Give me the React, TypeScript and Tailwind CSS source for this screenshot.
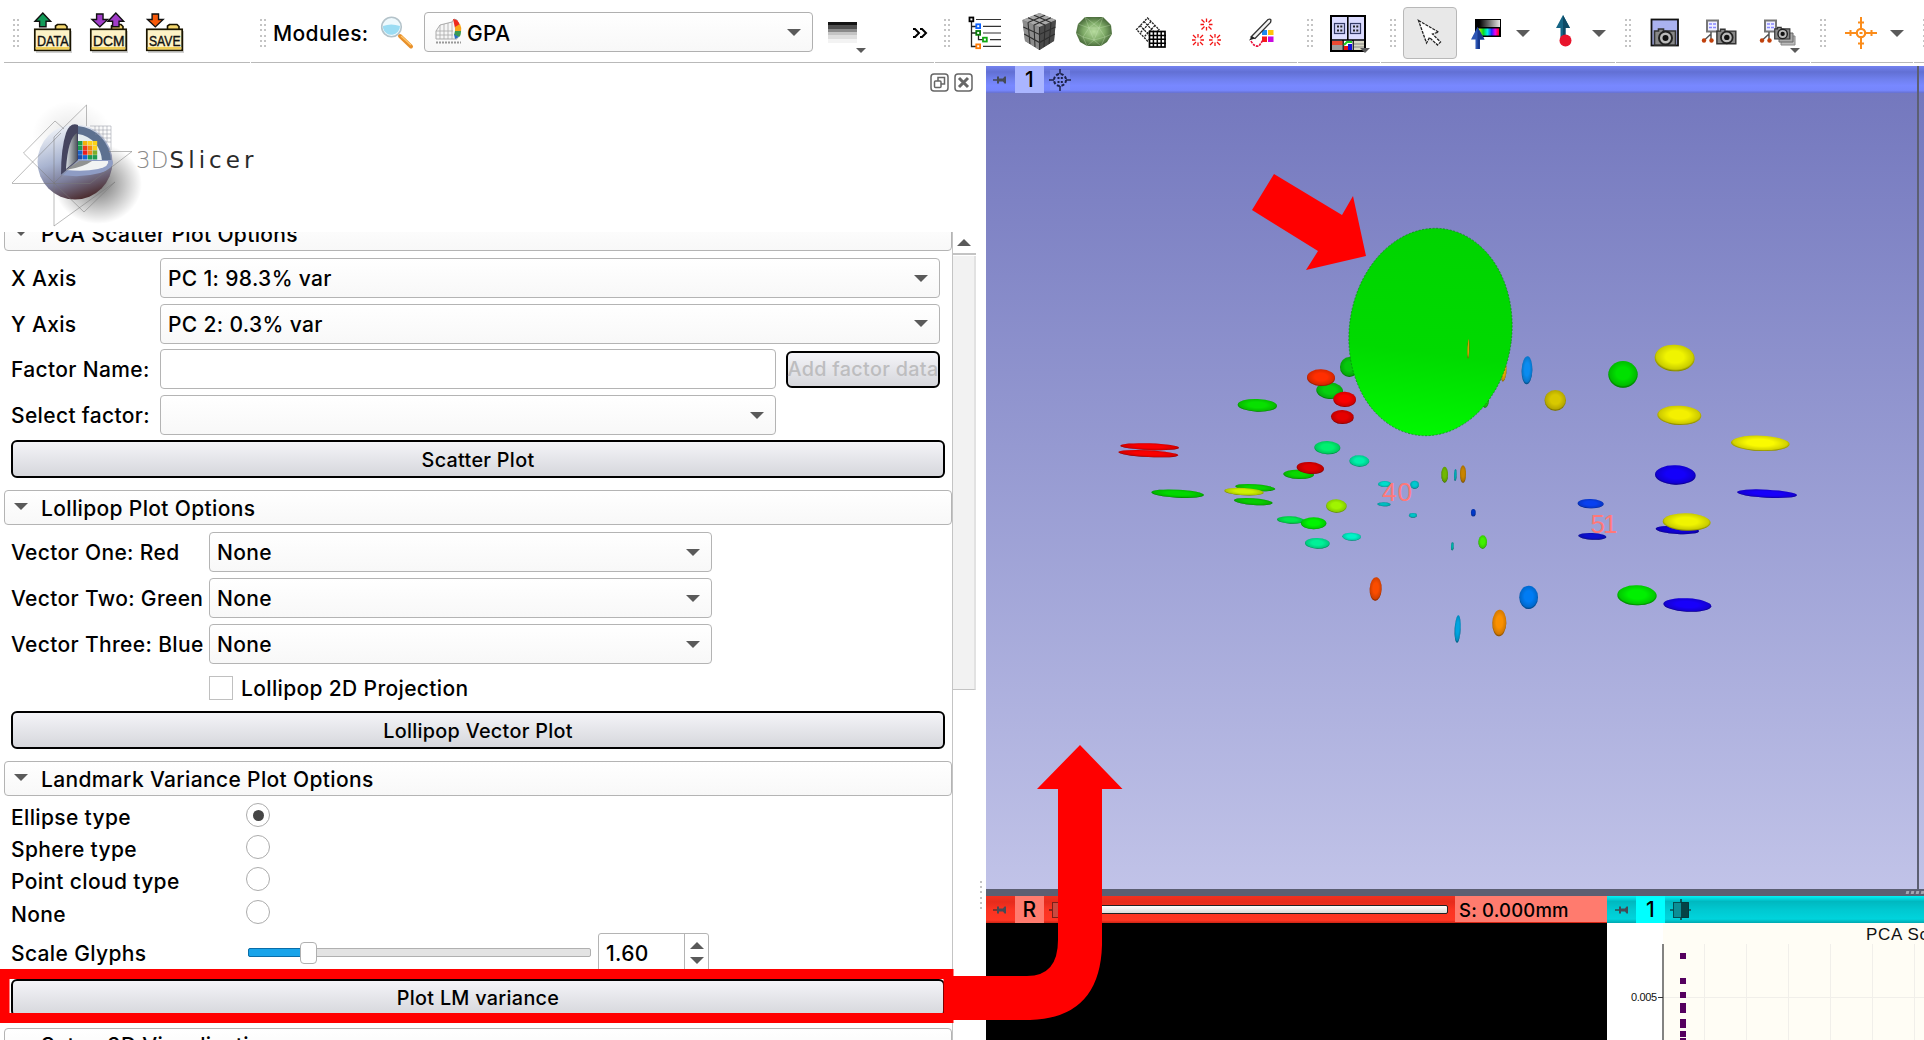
import React from "react";

type Kids = { children?: React.ReactNode };

const Caret = ({ className = "" }: { className?: string }) => (
  <svg className={`h-[7px] w-[14px] shrink-0 ${className}`} viewBox="0 0 14 7">
    <path d="M0 0H14L7 7Z" fill="#5a5a5a" />
  </svg>
);

const SmallCaret = ({ className = "" }: { className?: string }) => (
  <svg className={`h-[5px] w-[10px] shrink-0 ${className}`} viewBox="0 0 10 5">
    <path d="M0 0H10L5 5Z" fill="#5a5a5a" />
  </svg>
);

const Handle = () => (
  <div className="mt-[19px] grid h-[28px] w-[8px] shrink-0 grid-cols-2 content-between">
    {Array.from({ length: 12 }, (_, i) => (
      <i key={i} className="h-[2px] w-[2px] bg-[#c4c4c4]" />
    ))}
  </div>
);

const Bar = ({ className = "", children }: Kids & { className?: string }) => (
  <div className={`flex h-[63px] shrink-0 border-b-[1.5px] border-[#b9b9b9] pl-[9px] ${className}`}>
    <Handle />
    {children}
  </div>
);

const UP = "M0 9L8.5 0L17 9H12V15H5V9Z";
const DOWN = "M0 6H5V0H12V6H17L8.5 14Z";

const Folder = ({ label, arrows }: { label: string; arrows: [string, number, number, string][] }) => (
  <svg className="mt-[12px] h-[41px] w-[40px] shrink-0" viewBox="0 0 40 41">
    <rect x="3" y="19" width="36" height="22" fill="#00000030" />
    <path d="M22.5 17V14L24.5 12.5H32L34 14.5V17" fill="#f5d76e" stroke="#1a1400" strokeWidth="1.6" />
    {arrows.map(([d, x, y, c], i) => (
      <path key={i} d={d} transform={`translate(${x} ${y}) scale(.92)`} fill={c} stroke="#111" strokeWidth="1.5" />
    ))}
    <rect x="1.8" y="17.3" width="35.4" height="21" fill="#fdf2c6" stroke="#1a1400" strokeWidth="1.7" />
    <rect x="2.7" y="35" width="33.6" height="2.5" fill="#f2cf57" />
    <text x="4" y="34" letterSpacing="0" fontFamily="Liberation Sans" fontSize="15.5" textLength="31.5" lengthAdjust="spacingAndGlyphs" fill="#111" stroke="#111" strokeWidth=".4">
      {label}
    </text>
  </svg>
);

const Magnifier = () => (
  <svg className="ml-[14px] mt-[15px] h-[35px] w-[34px] shrink-0" viewBox="0 0 34 35">
    <path d="M20 21L31 31.5" stroke="#e8902a" strokeWidth="4" strokeLinecap="round" />
    <path d="M21 21L31 30" stroke="#ffc66b" strokeWidth="1.3" />
    <circle cx="11.5" cy="12" r="9.8" fill="#eef9fd" stroke="#b4c3ca" strokeWidth="1.6" />
    <path d="M3 11Q11 8 20 11A8.6 8.6 0 0 1 3 13Z" fill="#9bdcf3" />
  </svg>
);

const GpaIcon = () => (
  <svg className="h-[28px] w-[28px] shrink-0" viewBox="0 0 28 28">
    <path d="M1 13L5 7L17 4L19 1L22 2V21L1 21Z" fill="#f6f6f6" stroke="#aaa" strokeWidth="1" />
    <path d="M1 13H18M1 17H18M5 7V21M9 6V21M13 5V21M17 4V21" stroke="#aaa" strokeWidth=".8" />
    <path d="M18 1Q23 1 25 7L20 10Z" fill="#ee2a1c" />
    <path d="M20 9L25 6Q27 10 26 14L20 14Z" fill="#f9a51a" />
    <path d="M20 13H26Q26 18 24 19L19 17Z" fill="#3a9a52" />
    <path d="M19 16L24 19L20 21Z" fill="#2a6fc0" />
    <path d="M1 24.5H26" stroke="#999" strokeWidth="1.8" strokeDasharray="2 1" />
  </svg>
);

const TreeIcon = () => (
  <svg className="ml-[16px] mt-[16px] h-[34px] w-[34px] shrink-0" viewBox="0 0 34 34">
    <path d="M3.5 4V30.5H9M3.5 10.5H9M3.5 17H9M10.5 19V23.7H15" fill="none" stroke="#222" strokeWidth="1.3" />
    <path d="M8 3.5H33M15 10.3H33M15 17H33M22 23.7H33M15 30.4H33" stroke="#333" strokeWidth="1.2" />
    {[[1.5, 1.5, "#000"], [8.3, 8.3, "#0a62ff"], [8.3, 15, "#087a08"], [15, 21.7, "#12a812"], [8.3, 28.4, "#ff7a00"]].map(([x, y, c]) => (
      <rect key={`${x}-${y}`} x={x} y={y} width="3.8" height="3.8" fill="#fff" stroke={c as string} strokeWidth="1.8" />
    ))}
  </svg>
);

const CubeIcon = () => (
  <svg className="ml-[19px] mt-[12px] h-[40px] w-[37px] shrink-0" viewBox="0 0 37 40">
    <path d="M18.5 1L35 8L33 29L18.5 38L4 29L1.5 8Z" fill="#777" />
    <path d="M18.5 1L35 8L18.5 15L1.5 8Z" fill="#a9a9a9" />
    <path d="M1.5 8L18.5 15V38L4 29Z" fill="#8c8c8c" />
    <path d="M35 8L18.5 15V38L33 29Z" fill="#4a4a4a" />
    <path
      d="M7 5.8L24 13M13 3.3L30 10.5M30 5.8L13 13M24 3.3L7 10.5M2.3 15L18.5 22.5L34.5 15M3.2 22L18.5 30.5L33.8 22M7 10.5L9 32M13 13L14 35M30 10.5L28 32M24 13L23 35M18.5 15V38"
      fill="none" stroke="#2e2e2e" strokeWidth="1.1"
    />
  </svg>
);

const ModelIcon = () => (
  <svg className="ml-[17px] mt-[16px] h-[31px] w-[38px] shrink-0" viewBox="0 0 38 31">
    <defs>
      <radialGradient id="model">
        <stop offset="0" stopColor="#b8dda0" />
        <stop offset=".6" stopColor="#7fab68" />
        <stop offset="1" stopColor="#4d6f3e" />
      </radialGradient>
    </defs>
    <path d="M10 1H28L36 9L37 18L32 26L26 30H12L5 26L1 17L3 8Z" fill="url(#model)" />
    <path d="M10 1L14 12L3 8M28 1L24 12L36 9M14 12H24M14 12L8 21L1 17M24 12L30 21L37 18M14 12L19 24L24 12M8 21L19 24L30 21M8 21L12 30L19 24L26 30L30 21M10 1L24 12M28 1L14 12" fill="none" stroke="#cfe8bf" strokeOpacity=".4" strokeWidth=".8" />
  </svg>
);

const TransformIcon = () => (
  <svg className="ml-[22px] mt-[16px] h-[33px] w-[32px] shrink-0" viewBox="0 0 32 33">
    <g fill="none" stroke="#222" strokeWidth="1.3" strokeDasharray="2.2 1">
      <path d="M12.5 2L24 13.5L12.5 25L1.5 13.5Z" />
      <path d="M9 5.5L20 17M5 9.5L16 21M16 5.500L5 17M20 9.500L9 21" />
    </g>
    <rect x="14.5" y="15.5" width="15.5" height="15.5" fill="#fff" stroke="#000" strokeWidth="1.7" />
    <path d="M18.4 15V31M22.3 15V31M26.2 15V31M14 19.4H31M14 23.3H31M14 27.2H31" stroke="#000" strokeWidth="1.5" />
  </svg>
);

const Burst = ({ x, y }: { x: number; y: number }) => (
  <path transform={`translate(${x} ${y})`} d="M0-6V-2.500M0 2.500V6M-6 0H-2.500M2.500 0H6M-5-5L-2-2M5-5L2-2M-5 5L-2 2M5 5L2 2" stroke="#f31414" strokeWidth="1.300" />
);

const MarkupsIcon = () => (
  <svg className="ml-[23px] mt-[17px] h-[30px] w-[33px] shrink-0" viewBox="0 0 33 30">
    <Burst x={16.5} y={7.5} />
    <Burst x={8} y={23} />
    <Burst x={25} y={23} />
  </svg>
);

const EditorIcon = () => (
  <svg className="ml-[25px] mt-[17px] h-[32px] w-[28px] shrink-0" viewBox="0 0 28 32">
    <rect x="14" y="13" width="5" height="5" fill="#1b8bf2" />
    <rect x="20" y="13" width="5.5" height="5" fill="#ffc30a" />
    <rect x="14" y="19.5" width="5" height="5.5" fill="#f41b1b" />
    <rect x="20" y="19.5" width="5.5" height="5.5" fill="#c80ae0" />
    <path d="M3 24Q6 30 11 29L15 23" fill="none" stroke="#e8103c" strokeWidth="1.6" strokeDasharray="2.5 1" />
    <path d="M3 20L20 2.5Q24 1 22.5 5.5L7 21.5Z" fill="#f4f4f4" stroke="#333" strokeWidth="1.3" />
    <path d="M1 23.5L4 19L7 21.5Z" fill="#222" />
  </svg>
);

const LayoutIcon = () => (
  <svg className="h-[37px] w-[36px]" viewBox="0 0 36 37">
    <rect x="1" y="1" width="34" height="35" fill="#dcdcff" stroke="#000" strokeWidth="2" />
    <path d="M17.8 1V25M1 25H35M13 25V36M23 25V36" stroke="#000" strokeWidth="1.6" />
    {[4.5, 20.5].map((x) => (
      <g key={x}>
        <rect x={x} y="8.5" width="10" height="10" fill="#cfd0f5" stroke="#333a66" strokeWidth="1.2" />
        <path d={`M${x + 2.5} 11.5h2M${x + 5.8} 11.5h2M${x + 2.5} 15.5h2M${x + 5.8} 15.5h2`} stroke="#222" strokeWidth="1.8" />
      </g>
    ))}
    <rect x="2" y="26" width="10.5" height="4" fill="#ec4a33" />
    <rect x="2" y="30" width="10.5" height="5" fill="#9d9d9d" />
    <rect x="14" y="26" width="8.5" height="9" fill="#fff" />
    <path d="M14 31h4v4h-4z" fill="#e11" />
    <path d="M18 29h4v6h-4z" fill="#1010d8" />
    <path d="M14 30l3-3h5" stroke="#2c2" strokeWidth="2" fill="none" />
    <rect x="24" y="26" width="10" height="9" fill="#d9d8c4" />
    <path d="M24 29H34M24 32H34" stroke="#888" />
  </svg>
);

const CursorIcon = () => (
  <svg className="h-[29px] w-[26px]" viewBox="0 0 26 29">
    <path d="M1.5 1.5L21.5 13L15.5 15L23.5 23L20.5 26L12.5 18.5L9.5 24Z" fill="#fff" stroke="#222" strokeWidth="1.3" strokeDasharray="3 1" />
  </svg>
);

const WindowLevelIcon = () => (
  <svg className="ml-[13px] mt-[18px] h-[32px] w-[31px] shrink-0" viewBox="0 0 31 32">
    <defs>
      <linearGradient id="gray"><stop offset=".1" /><stop offset="1" stopColor="#e8e8e8" /></linearGradient>
      <linearGradient id="hue">
        <stop offset="0" stopColor="#fe0" /><stop offset=".25" stopColor="#0d2" /><stop offset=".45" stopColor="#0ee" />
        <stop offset=".65" stopColor="#22f" /><stop offset=".82" stopColor="#e0e" /><stop offset="1" stopColor="#f01" />
      </linearGradient>
    </defs>
    <rect x="5" y="1" width="26" height="18" fill="#000" />
    <rect x="7" y="2" width="23" height="7" fill="url(#gray)" />
    <rect x="8" y="10.5" width="21" height="7" fill="url(#hue)" />
    <path d="M7.5 9L14.5 21.5H10V31H5.5V21.5H1Z" fill="#2d56b5" />
    <path d="M7.5 9L14.5 21.5H10V31H7.5Z" fill="#17398f" />
  </svg>
);

const PlaceIcon = () => (
  <svg className="ml-[25px] mt-[14px] h-[33px] w-[18px] shrink-0" viewBox="0 0 18 33">
    <path d="M8 1L15 14H10.5V24H5.5V14H1Z" fill="#156585" />
    <path d="M8 1L15 14H10.5V24H8Z" fill="#0d4a66" />
    <circle cx="10.5" cy="26.5" r="6" fill="#e8142c" />
  </svg>
);

const Camera = ({ x, y, s = 1 }: { x: number; y: number; s?: number }) => (
  <g transform={`translate(${x} ${y}) scale(${s})`}>
    <path d="M1 4H5V2H10V4H22V18H1Z" fill="#888" stroke="#333" strokeWidth="1.6" />
    <circle cx="12" cy="11" r="6.5" fill="#bbb" stroke="#222" strokeWidth="2" />
    <circle cx="12" cy="11" r="3" fill="#111" />
  </g>
);

const Tree3 = () => (
  <g>
    <rect x="6" y="1.5" width="11" height="11" fill="#eef" stroke="#777" strokeWidth="2" />
    <path d="M8 5h3M12 5h3M8 8.5h3M12 8.5h3" stroke="#88f" strokeWidth="1.3" />
    <path d="M10 13V15L3.5 21M10 15V21M10 13V16" fill="none" stroke="#555" strokeWidth="1.5" />
    <circle cx="3" cy="21.5" r="2.2" fill="#c0400c" />
    <circle cx="10.5" cy="21.5" r="2.2" fill="#c0400c" />
  </g>
);

const CrosshairIcon = () => (
  <svg className="ml-[16px] mt-[16px] h-[34px] w-[34px] shrink-0" viewBox="-17 -17 34 34" fill="none" stroke="#fb8c1a" strokeWidth="2">
    <path d="M0-16V16M-16 0H16M-3-10.5H3M-3 10.5H3M-10.5-3V3M10.5-3V3" />
    <circle r="4.2" fill="#fff" strokeWidth="2.2" />
    <path d="M-1.5 0H1.5" />
  </svg>
);

const Toolbar = () => (
  <div className="flex h-[63px] w-full gap-[1px] overflow-hidden pl-[4px]">
    <Bar className="w-[246px]">
      <div className="ml-[12px] flex gap-[16px]">
        <Folder label="DATA" arrows={[[UP, 2, 1, "#129a58"]]} />
        <Folder label="DCM" arrows={[[DOWN, 3, 2, "#a03cc8"], [UP, 19, 1, "#a03cc8"]]} />
        <Folder label="SAVE" arrows={[[DOWN, 2.5, 2, "#f85a0a"]]} />
      </div>
    </Bar>
    <Bar className="w-[683px]">
      <span className="ml-[5px] mt-[19px] h-[30px] w-[93px] whitespace-nowrap leading-[30px]">Modules:</span>
      <Magnifier />
      <div className="ml-[10px] mt-[12px] flex h-[40px] w-[389px] shrink-0 items-center rounded-[4px] border-[1.5px] border-[#b0b0b0] bg-linear-to-b from-white to-[#f8f8f8] pl-[10px] pr-[11px]">
        <GpaIcon />
        <span className="ml-[4px] mt-[4px] flex-1">GPA</span>
        <Caret />
      </div>
      <div className="ml-[15px] mt-[22px] w-[38px] shrink-0">
        <div className="h-[21px] w-[29px] bg-[linear-gradient(#141414_0_3px,#505050_3px_7px,#8a8a8a_7px_10px,#c4c4c4_10px_13px,#dedede_13px_17px,#f3f3f3_17px)]" />
        <SmallCaret className="ml-[28px] mt-[5px]" />
      </div>
      <svg className="ml-[46px] mt-[28px] h-[10px] w-[16px] shrink-0" viewBox="0 0 16 10" fill="none" stroke="#000" strokeWidth="2">
        <path d="M1 1H3L7 5L3 9H1M8 1H10L14 5L10 9H8" />
      </svg>
    </Bar>
    <Bar className="w-[362px]">
      <TreeIcon /><CubeIcon /><ModelIcon /><TransformIcon /><MarkupsIcon /><EditorIcon />
    </Bar>
    <Bar className="w-[82px]">
      <div className="relative ml-[15px] mt-[15px]">
        <LayoutIcon />
        <SmallCaret className="absolute left-[30px] top-[33px]" />
      </div>
    </Bar>
    <Bar className="w-[234px]">
      <div className="ml-[5px] mt-[7px] flex h-[52px] w-[54px] shrink-0 items-center justify-center rounded-[4px] border-[1.5px] border-[#b8b8b8] bg-[#e8e8e8]">
        <CursorIcon />
      </div>
      <WindowLevelIcon />
      <Caret className="ml-[15px] mt-[30px]" />
      <PlaceIcon />
      <Caret className="ml-[19px] mt-[30px]" />
    </Bar>
    <Bar className="w-[194px]">
      <svg className="ml-[17px] mt-[18px] h-[30px] w-[30px] shrink-0" viewBox="0 0 30 30">
        <rect x="1.5" y="1.5" width="26.5" height="26" fill="#aab2ef" stroke="#111" strokeWidth="1.8" />
        <Camera x={3.5} y={9} />
      </svg>
      <svg className="ml-[21px] mt-[19px] h-[28px] w-[38px] shrink-0" viewBox="0 0 38 28">
        <Tree3 /><Camera x={15} y={8.5} s={0.9} />
      </svg>
      <div className="relative ml-[20px] mt-[19px] w-[40px] shrink-0">
        <svg className="h-[28px] w-[38px]" viewBox="0 0 38 28">
          <Tree3 />
          <path d="M22 17h14v9h-14z" fill="#bbb" stroke="#888" />
          <path d="M20 14h14v9h-14z" fill="#aaa" stroke="#666" />
          <Camera x={15} y={7} s={0.72} />
        </svg>
        <SmallCaret className="absolute left-[31px] top-[29px]" />
      </div>
    </Bar>
    <Bar className="w-[102px]">
      <CrosshairIcon />
      <Caret className="ml-[12px] mt-[30px]" />
    </Bar>
    <Bar className="w-[20px]" />
  </div>
);

const VOXELS = [
  "#1f9a50", "#f2b10c", "#ffd21a", "#ffd21a", "#1f9a50", "#ee3a1c", "#f58a12", "#ffd21a",
  "#1a64c8", "#ee1c1c", "#f2861c", "#7cae2c", "#1c4fae", "#1a66d6", "#1f9a50", "#1f9a50",
];

const Logo = () => (
  <svg className="h-[130px] w-[260px] shrink-0" viewBox="0 100 260 130">
    <defs>
      <linearGradient id="ball" x1=".25" y1="0" x2=".6" y2="1">
        <stop offset="0" stopColor="#f3f6fa" /><stop offset=".45" stopColor="#a9b4d0" />
        <stop offset=".7" stopColor="#7d7f9c" /><stop offset="1" stopColor="#4a2a2c" />
      </linearGradient>
      <radialGradient id="shade"><stop offset="0" stopColor="#000" stopOpacity=".55" /><stop offset="1" stopColor="#000" stopOpacity="0" /></radialGradient>
      <linearGradient id="inner"><stop offset="0" stopColor="#d8dee2" /><stop offset="1" stopColor="#555a62" /></linearGradient>
    </defs>
    <ellipse cx="98" cy="184" rx="44" ry="40" fill="url(#shade)" />
    <ellipse cx="72" cy="135" rx="40" ry="34" fill="url(#shade)" opacity=".18" />
    <circle cx="75" cy="162" r="37.5" fill="url(#ball)" />
    <path d="M78 126A36 36 0 0 1 111 161L78 161Z" fill="#5d7190" />
    <path d="M78 134A28 28 0 0 1 102 161L78 161Z" fill="#e4edf0" />
    <path d="M78 125Q70 122 66 133Q61 148 61 175L78 161Z" fill="#45455f" />
    <path d="M77 133Q68 138 66 169L77 160Z" fill="url(#inner)" />
    <path d="M61 175L78 160L112 160Q116 168 100 173Q82 178 61 175Z" fill="#8e9cc4" />
    <path d="M66 170L79 161L108 161Q110 166 98 169Q84 172 66 170Z" fill="#f1f3f3" />
    <path d="M66 170L79 161L92 161Q84 167 66 170Z" fill="#00000066" />
    {VOXELS.map((c, i) => (
      <rect key={i} x={78 + (i % 4) * 4.9} y={141 + Math.floor(i / 4) * 4.7} width="4.5" height="4.4" fill={c} />
    ))}
    <path d="M90 126H111M92 130H111M95 134H111M100 138H111M105 142H111M95 126V131M99 126V134M103 126V138M107 126V142M111 126V150" stroke="#8a8f9c" strokeOpacity=".7" strokeWidth=".7" />
    <path d="M54 226V137L86.5 105V126M54 226L115 182L84 212L54 183L23.5 153L55 121L64 129M12 183L61 133M12 183.5H90L132 151.5H108M54 183L78 160" fill="none" stroke="#777" strokeOpacity=".5" strokeWidth="1" />
    <g fontFamily="DejaVu Sans" fontSize="23" letterSpacing="0">
      <text x="136" y="168" textLength="32.5" fill="#8a8a8a" fontWeight="200">3D</text>
      <text x="169.5" y="168" textLength="84" fill="#2a2a2a">Slicer</text>
    </g>
  </svg>
);

const Section = ({ title, className = "" }: { title: string; className?: string }) => (
  <div className={`ml-[4px] flex h-[35px] w-[948px] shrink-0 items-center rounded-[4px] border-[1.5px] border-[#b4b4b4] bg-linear-to-b from-white to-[#f8f8f8] pl-[9px] ${className}`}>
    <Caret className="mb-[2px]" />
    <span className="ml-[13px] mt-[2px] whitespace-nowrap">{title}</span>
  </div>
);

const Select = ({ value, className = "" }: { value?: string; className?: string }) => (
  <div className={`flex h-[40px] shrink-0 items-center justify-between rounded-[4px] border-[1.5px] border-[#b4b4b4] bg-linear-to-b from-white to-[#f8f8f8] pl-[7px] pr-[11px] ${className}`}>
    <span className="mt-[2px] whitespace-nowrap">{value}</span>
    <Caret />
  </div>
);

const BTN = "rounded-[6px] border-2 border-black bg-linear-to-b from-[#f4f4f8] to-[#d6d7dc] text-[19.8px] tracking-[0.3px]";

const Action = ({ label, className = "" }: { label: string; className?: string }) => (
  <button className={`ml-[11px] h-[38px] w-[934px] shrink-0 pt-[1px] ${BTN} ${className}`}>{label}</button>
);

const Field = ({ label, labelClass, children }: Kids & { label: string; labelClass: string }) => (
  <div className="flex h-[40px] shrink-0 items-center pl-[11px]">
    <span className={`mt-[2px] shrink-0 whitespace-nowrap ${labelClass}`}>{label}</span>
    {children}
  </div>
);

const ModulePanel = () => (
  <div className="flex h-[977px] w-[986px] shrink-0 flex-col">
    <div className="flex h-[169px] shrink-0 justify-between">
      <div className="pt-[37px]"><Logo /></div>
      <div className="mr-[13px] mt-[10px] flex gap-[5px]">
        <svg className="h-[19px] w-[19px]" viewBox="0 0 19 19" fill="none" stroke="#666" strokeWidth="1.5">
          <rect x="1" y="1" width="17" height="17" rx="3" />
          <rect x="4.5" y="8" width="6.5" height="6.5" rx="1" /><path d="M8 8V4.5H14.5V11H11" />
        </svg>
        <svg className="h-[19px] w-[19px]" viewBox="0 0 19 19" fill="none" stroke="#666" strokeWidth="1.5">
          <rect x="1" y="1" width="17" height="17" rx="3" />
          <path d="M5 5L14 14M14 5L5 14" strokeWidth="3" />
        </svg>
      </div>
    </div>
    <div className="flex h-[808px] overflow-hidden">
      <div className="flex w-[952px] shrink-0 flex-col">
        <Section title="PCA Scatter Plot Options" className="mt-[-16px]" />
        <div className="mt-[7px] flex flex-col gap-[5.7px]">
          <Field label="X Axis" labelClass="w-[149px]"><Select value="PC 1: 98.3% var" className="w-[780px]" /></Field>
          <Field label="Y Axis" labelClass="w-[149px]"><Select value="PC 2: 0.3% var" className="w-[780px]" /></Field>
          <Field label="Factor Name:" labelClass="w-[149px]">
            <div className="h-[40px] w-[616px] rounded-[4px] border-[1.5px] border-[#b4b4b4]" />
            <button className={`ml-[10px] h-[37px] w-[154px] whitespace-nowrap text-[#bdbdbf] ${BTN}`}>
              <span className="-mx-2">Add factor data</span>
            </button>
          </Field>
          <Field label="Select factor:" labelClass="w-[149px]"><Select className="w-[616px]" /></Field>
        </div>
        <Action label="Scatter Plot" className="mt-[5px]" />
        <Section title="Lollipop Plot Options" className="mt-[12px]" />
        <div className="mt-[7px] flex flex-col gap-[6px]">
          <Field label="Vector One: Red" labelClass="w-[198px]"><Select value="None" className="w-[503px]" /></Field>
          <Field label="Vector Two: Green" labelClass="w-[198px]"><Select value="None" className="w-[503px]" /></Field>
          <Field label="Vector Three: Blue" labelClass="w-[198px]"><Select value="None" className="w-[503px]" /></Field>
        </div>
        <div className="ml-[209px] mt-[12px] flex h-[24px] shrink-0 items-center">
          <i className="h-[24px] w-[24px] border-[1.5px] border-[#c0c0c0]" />
          <span className="ml-[8px] mt-[2px]">Lollipop 2D Projection</span>
        </div>
        <Action label="Lollipop Vector Plot" className="mt-[11px]" />
        <Section title="Landmark Variance Plot Options" className="mt-[12px]" />
        <div className="mt-[7px] flex shrink-0 flex-col">
          {["Ellipse type", "Sphere type", "Point cloud type", "None"].map((t, i) => (
            <div key={t} className="flex h-[32.2px] items-start pl-[11px]">
              <span className="w-[235px] leading-[30px]">{t}</span>
              <i className="flex h-[24px] w-[24px] items-center justify-center rounded-full border-[1.5px] border-[#acacac]">
                {i === 0 && <b className="h-[11px] w-[11px] rounded-full bg-[#454545]" />}
              </i>
            </div>
          ))}
        </div>
        <div className="mt-[1px] flex h-[40px] shrink-0 items-center pl-[11px]">
          <span className="mt-[2px] w-[237px]">Scale Glyphs</span>
          <div className="relative h-[9px] w-[343px] rounded-[2px] border border-[#b0b0b0] bg-[#e3e3e3]">
            <i className="absolute -left-px -top-px h-[9px] w-[56px] rounded-[2px] border border-[#0a6da8] bg-[#18a4ea]" />
            <i className="absolute left-[51px] top-[-7px] h-[22px] w-[17px] rounded-[4px] border-[1.5px] border-[#b0b0b0] bg-white" />
          </div>
          <div className="ml-[7px] flex h-[40px] w-[111px] rounded-[3px] border-[1.5px] border-[#b4b4b4]">
            <span className="w-[86px] border-r border-[#b4b4b4] pl-[7px] leading-[40px]">1.60</span>
            <span className="flex flex-1 flex-col items-center gap-[8px] pt-[8px]">
              <Caret className="rotate-180" /><Caret />
            </span>
          </div>
        </div>
        <Action label="Plot LM variance" className="mt-[6px]" />
        <Section title="Setup 3D Visualization" className="mt-[11px]" />
      </div>
      <div className="flex h-full w-[24px] flex-col items-center border-l border-[#c4c4c4]">
        <Caret className="mr-[2px] mt-[7px] rotate-180" />
        <div className="mt-[7px] h-[1.5px] w-full bg-[#c4c4c4]" />
        <div className="mt-[1px] h-[434px] w-full border-b border-r-2 border-b-[#c4c4c4] border-r-[#e2e2e2] bg-[#f2f2f2]" />
      </div>
      <div className="mt-[649px] flex h-[28px] flex-col justify-between pl-[4px]">
        {[0, 1, 2, 3, 4, 5].map((i) => <i key={i} className="h-[2px] w-[2px] bg-[#c4c4c4]" />)}
      </div>
    </div>
  </div>
);

type G = [number, number, number, number, number, string];

/* Glyphs in third-pixel units: cx, cy, rx, ry, rotation, colour */
const BEHIND: G[] = [
  [748, 81, 28, 30, 0, "#06c80c"],
  [1212, 98, 7, 27, 8, "#e0a800"],
  [1158, 188, 8, 16, 15, "#20c010"],
];
const GLYPHS: G[] = [
  [689, 152, 40, 25, 5, "#06d010"], [663, 113, 42, 25, 2, "#ff2e00"], [734, 178, 34, 23, 2, "#fa0000"], [727, 231, 34, 21, 2, "#e60000"],
  [472, 196, 59, 19, 2, "#08e000"], [149, 320, 88, 10, 2, "#fa0000"], [145, 341, 90, 10, 3, "#fa0000"],
  [682, 323, 39, 20, 2, "#00f070"], [778, 363, 30, 17, 2, "#00f0a8"], [596, 403, 46, 14, 2, "#08d800"], [631, 384, 41, 18, 4, "#e00000"],
  [466, 443, 60, 10, 4, "#08d400"], [432, 455, 59, 11, 3, "#d0f000"], [460, 485, 58, 10, 4, "#08cc00"], [233, 461, 79, 12, 3, "#00d800"],
  [854, 432, 20, 9, 0, "#00dccc"], [944, 434, 13, 12, 0, "#00c8d0"], [852, 493, 20, 6, 2, "#00bcc0"], [939, 526, 12, 7, 0, "#00c4c8"],
  [709, 498, 31, 20, 2, "#a0f400"], [572, 540, 41, 11, 3, "#00e850"], [641, 550, 38, 18, 0, "#00f400"], [652, 610, 37, 16, 2, "#00f098"],
  [755, 590, 28, 12, 2, "#00f4c8"], [827, 747, 18, 35, 3, "#fa4c00"], [1073, 867, 9, 41, 3, "#00a4e0"], [1198, 849, 21, 40, 2, "#fa9000"],
  [1034, 404, 10, 24, 0, "#70b800"], [1066, 405, 4, 18, 2, "#00a8b4"], [1089, 402, 9, 26, 0, "#c88400"], [1120, 518, 7, 11, 0, "#0038c8"],
  [1148, 606, 13, 20, 2, "#40f000"], [1057, 619, 4, 12, 3, "#00b0a8"], [1105, 27, 3, 29, 2, "#d8a000"],
  [1281, 91, 16, 42, 2, "#0a8cf0"], [1366, 181, 32, 31, 0, "#d8c800"], [1569, 103, 44, 40, 0, "#00e000"], [1724, 54, 60, 40, 3, "#f0f400"],
  [1738, 226, 66, 29, 2, "#f4f000"], [1981, 310, 88, 23, 2, "#fafa00"], [1726, 405, 61, 29, 2, "#1400fa"], [2001, 461, 90, 12, 3, "#1800fa"],
  [1472, 491, 39, 14, 2, "#0840f0"], [1477, 589, 42, 10, 3, "#0c10d0"], [1732, 570, 65, 12, 3, "#1000d8"], [1760, 546, 72, 26, 2, "#f0f400"],
  [1286, 772, 28, 35, 0, "#007cf4"], [1611, 766, 59, 30, 2, "#00f000"], [1762, 795, 72, 20, 3, "#1800fa"],
];

const Glyph = ({ g }: { g: G }) => (
  <g transform={`translate(${g[0]} ${g[1]}) rotate(${g[4]})`}>
    <ellipse rx={g[2]} ry={g[3]} fill={g[5]} />
    <ellipse rx={g[2]} ry={g[3]} fill="url(#lit)" />
  </g>
);

const Scene = () => (
  <svg className="absolute inset-0 h-full w-full" viewBox="986 93 931 796">
    <defs>
      <radialGradient id="lit" cx=".5" cy=".46" r=".56">
        <stop offset=".4" stopColor="#000" stopOpacity="0" />
        <stop offset=".82" stopColor="#000" stopOpacity=".16" />
        <stop offset="1" stopColor="#000" stopOpacity=".6" />
      </radialGradient>
      <linearGradient id="big" x1="0" y1="0" x2="0" y2="1">
        <stop offset="0" stopColor="#00d400" /><stop offset=".6" stopColor="#00da00" /><stop offset="1" stopColor="#00f800" />
      </linearGradient>
    </defs>
    <g transform="translate(1100 340) scale(.33333)">{BEHIND.map((g, i) => <Glyph key={i} g={g} />)}</g>
    <ellipse cx="1430.5" cy="332" rx="81.3" ry="104" transform="rotate(7 1430.5 332)" fill="url(#big)" stroke="#087a10" strokeWidth=".6" strokeDasharray="2 1.5" />
    <g transform="translate(1100 340) scale(.33333)">{GLYPHS.map((g, i) => <Glyph key={i} g={g} />)}</g>
    <g fill="#ff7878" fontFamily="Liberation Sans" fontSize="26" letterSpacing="0" fontWeight="400">
      <text x="1382" y="500.5" textLength="30">40</text>
      <text x="1590.5" y="532.5" textLength="27">51</text>
    </g>
  </svg>
);

const Pin = ({ className = "" }: { className?: string }) => (
  <svg className={`h-[10px] w-[16px] shrink-0 ${className}`} viewBox="0 0 16 10">
    <path d="M1 5H6" stroke="#333" strokeWidth="1.2" />
    <path d="M5 1.5H7V3.5H11L12.5 1.5H14V8.5H12.5L11 6.5H7V8.5H5Z" fill="#454a55" />
  </svg>
);

const Target = () => (
  <svg className="h-[22px] w-[22px] shrink-0" viewBox="-11 -11 22 22" fill="none" stroke="#1c2248" strokeWidth="1.5">
    <rect x="-10" y="-10" width="20" height="20" fill="#8c98f0" fillOpacity=".45" stroke="none" />
    <path d="M0-11V-6M0 6V11M-11 0H-6M6 0H11" />
    <circle r="6" strokeDasharray="3 1.7" strokeWidth="2" />
    <path d="M-2.500-2h2M.8-2h2M-2.500 2h2M.8 2h2" strokeWidth="1.800" />
  </svg>
);

const SliceMark = ({ a, b }: { a: string; b: string }) => (
  <svg className="ml-[5px] h-[22px] w-[22px] shrink-0" viewBox="-11 -11 22 22">
    <path d="M0-11V11M-11 0H11" stroke="#111" strokeWidth="1.2" strokeDasharray="3 1.5" />
    <rect x="-7.5" y="-7.5" width="15" height="15" fill={a} stroke={b} />
    <rect x="0" y="-7.5" width="7.5" height="15" fill="#00000088" />
  </svg>
);

const BLUE = "bg-[linear-gradient(#7482f0_0,#6270d4_22%,#7080ee_50%,#7888ff_72%,#7686fc_90%,#6670d0_100%)]";

const Views = () => (
  <div className="mt-[3px] flex h-[974px] flex-1 flex-col">
    <div className="flex h-[823px] gap-[2px] bg-[#5c5f72]">
      <div className="w-[931px] shrink-0">
        <div className={`flex h-[27px] items-center ${BLUE}`}>
          <Pin className="ml-[6px]" />
          <span className="ml-[7px] flex h-[27px] w-[29px] items-center justify-center bg-[#aab5ff] pt-[1px]">1</span>
          <span className="ml-[5px] flex"><Target /></span>
        </div>
        <div className="relative h-[796px] bg-linear-to-b from-[#7478be] to-[#c1c3e8]"><Scene /></div>
      </div>
      <div className="flex-1">
        <div className={`h-[27px] ${BLUE}`} />
        <div className="h-[796px] bg-linear-to-b from-[#7478be] to-[#c1c3e8]" />
      </div>
    </div>
    <div className="flex h-[7px] items-center justify-end gap-[2px] bg-[#5c5f72]">
      {[0, 1, 2, 3].map((i) => <i key={i} className="h-[3px] w-[3px] -skew-x-12 bg-[#a4a6b2]" />)}
    </div>
    <div className="flex h-[144px]">
      <div className="w-[621px] shrink-0 bg-black">
        <div className="flex h-[27px] items-center bg-[linear-gradient(#f4301f_0,#e62c1c_22%,#fa3321_50%,#ff3624_90%,#cc2414_100%)]">
          <Pin className="ml-[6px]" />
          <span className="ml-[7px] flex h-[27px] w-[29px] items-center justify-center bg-[#ff7b6e] pt-[1px]">R</span>
          <SliceMark a="#c84a40" b="#7a2018" />
          <div className="ml-[30px] h-[9px] w-[347px] rounded-r-[2px] border-[1.5px] border-[#222] bg-linear-to-b from-white to-[#dcdcdc]" />
          <span className="ml-auto h-[26px] w-[152px] self-start bg-[#ff7b6e] pl-[4px] text-[18.5px] leading-[28px] tracking-[0.2px]">S: 0.000mm</span>
        </div>
      </div>
      <div className="flex flex-1 flex-col overflow-hidden">
        <div className="flex h-[27px] shrink-0 items-center bg-[linear-gradient(#00f4f8_0,#00b8c0_20%,#00c8d0_50%,#00d4dc_85%,#00a8b0_100%)]">
          <Pin className="ml-[7px]" />
          <span className="ml-[6px] flex h-[27px] w-[29px] items-center justify-center bg-[#00ffff] pt-[1px]">1</span>
          <SliceMark a="#0b8f96" b="#034f54" />
        </div>
        <svg className="h-[117px] w-[317px]" viewBox="1607 923 317 117">
          <rect x="1607" y="923" width="317" height="117" fill="#fff" />
          <rect x="1663" y="923" width="261" height="117" fill="#fffdf5" />
          <path d="M1704.5 944V1040M1746.5 944V1040M1788.5 944V1040M1830.5 944V1040M1872.5 944V1040M1914.5 944V1040M1663 997.5H1924" stroke="#f1efea" />
          <path d="M1663 944V1040M1658 997.5H1663" stroke="#333" strokeWidth="1.2" />
          {[[953, 6], [978, 6], [992, 6], [1003, 10], [1019, 9], [1031, 6], [1038, 2]].map(([y, h]) => (
            <rect key={y} x="1680" y={y} width="6" height={h} fill="#55005f" />
          ))}
          <g fontFamily="Liberation Sans" fill="#111" letterSpacing="0" fontWeight="400">
            <text x="1866" y="940" fontSize="17" textLength="137">PCA Scatter Plot</text>
            <text x="1631" y="1000.5" fontSize="11" textLength="26">0.005</text>
          </g>
        </svg>
      </div>
    </div>
  </div>
);

export default function App() {
  return (
    <div className="relative h-[1040px] w-[1924px] overflow-hidden bg-white font-['Inter',sans-serif] text-[21px] font-[450] leading-[26px] tracking-[0.35px] text-black">
      <Toolbar />
      <div className="flex">
        <ModulePanel />
        <Views />
      </div>
      <svg className="pointer-events-none absolute inset-0" width="1924" height="1040" viewBox="0 0 1924 1040">
        <rect x="4.5" y="974" width="944" height="44" fill="none" stroke="#f00" strokeWidth="10" />
        <path d="M944 976H1027Q1058 976 1058 940V789H1037L1080 745L1122.5 789H1102V945Q1100 1018 1030 1020H944Z" fill="#f00" />
        <path d="M1274 174L1342 215L1353 196L1366 256L1306 270L1318 251L1252 210Z" fill="#f00" />
      </svg>
    </div>
  );
}
